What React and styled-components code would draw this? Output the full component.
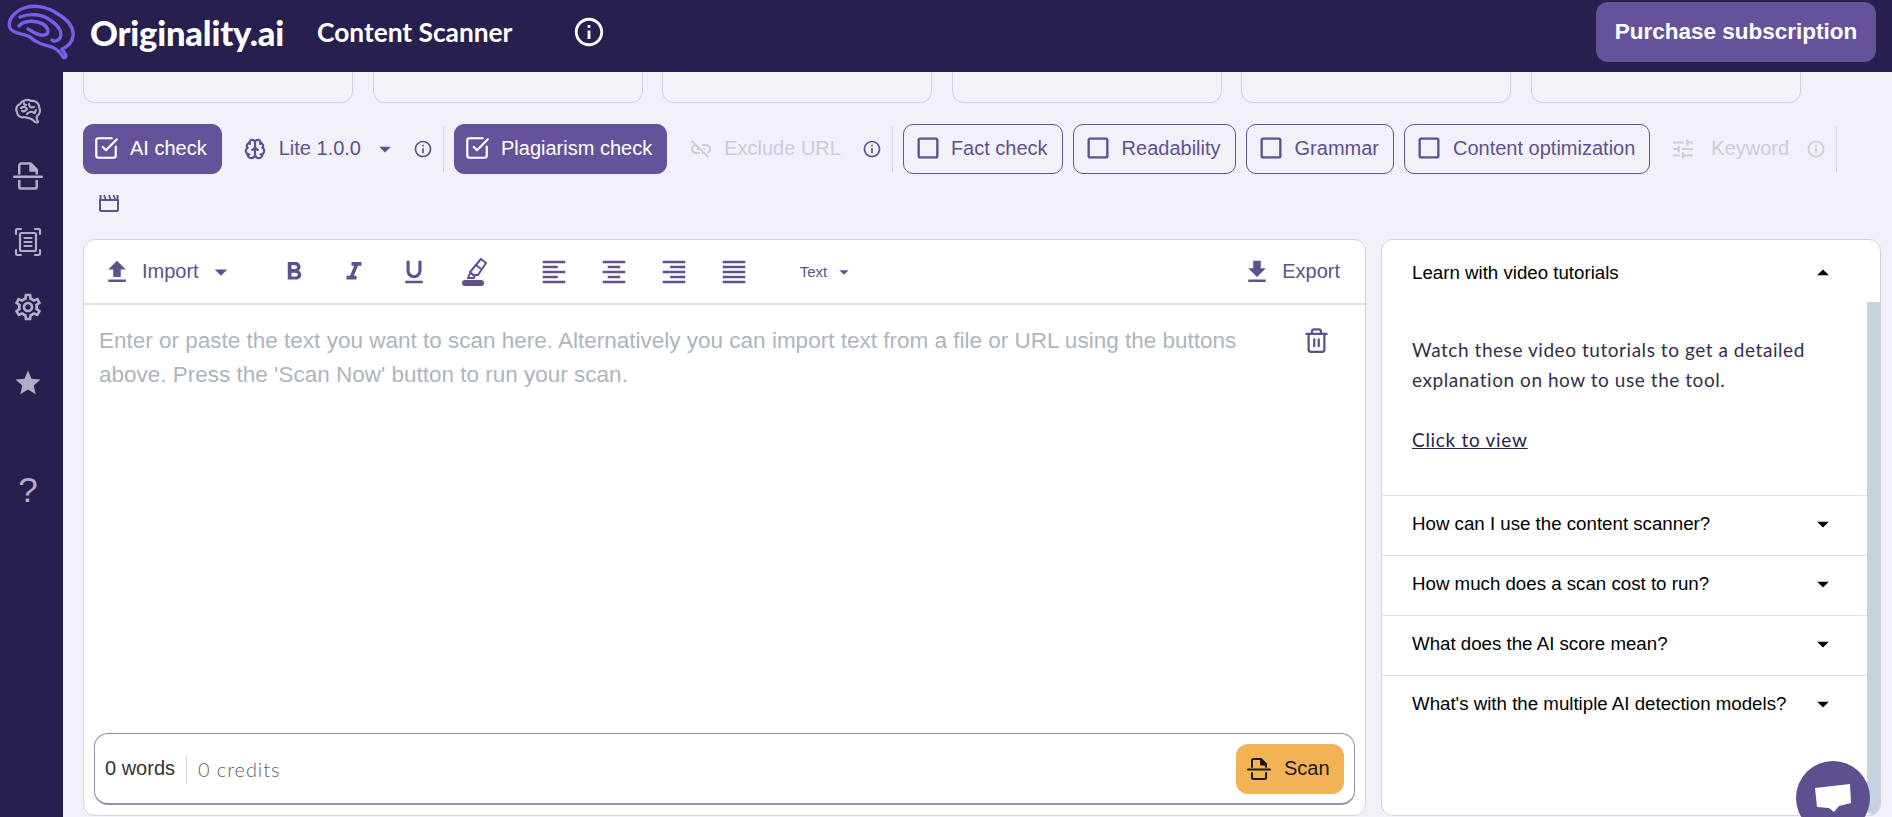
import React from 'react'
import styled, { createGlobalStyle } from 'styled-components'
import {
  MdArrowDropDown,
  MdArrowDropUp,
  MdCheckBoxOutlineBlank,
  MdFileDownload,
  MdFileUpload,
  MdFormatAlignCenter,
  MdFormatAlignJustify,
  MdFormatAlignLeft,
  MdFormatAlignRight,
  MdFormatBold,
  MdFormatItalic,
  MdFormatUnderlined,
  MdInfoOutline,
  MdLinkOff,
  MdOutlineSettings,
  MdStar,
  MdTune,
} from 'react-icons/md'
import { Brain, SquareCheckBig, Trash2 } from 'lucide-react'

const ink = '#271f4d'
const purple = '#64539b'
const purpleText = '#5f5090'
const muted = '#cfcbdd'
const navIcon = '#b3adc8'
const line = '#d5d1e6'

const GlobalStyle = createGlobalStyle`
  html, body {
    margin: 0;
    height: 100%;
    overflow: hidden;
    background: #f2f0f8;
    font-family: "Liberation Sans", Arial, sans-serif;
  }
  * { box-sizing: border-box; }
`

const Page = styled.div`
  display: grid;
  grid-template-rows: 72px 1fr;
  height: 100vh;
`

const Header = styled.header`
  display: flex;
  align-items: center;
  padding: 0 16px 8px 0;
  background: ${ink};
  color: #fff;
`

const LogoSlot = styled.span`
  display: flex;
  align-self: flex-start;
`

const Wordmark = styled.span`
  margin-left: 14px;
  font-family: Lato, sans-serif;
  font-size: 34.5px;
  font-weight: 900;
  letter-spacing: -0.2px;
`

const PageTitle = styled.span`
  margin-left: 33px;
  font-family: Lato, sans-serif;
  font-size: 26.3px;
  font-weight: 700;
`

const HeaderInfo = styled.span`
  display: flex;
  margin-left: 60px;
`

const PurchaseButton = styled.button`
  margin-left: auto;
  width: 280px;
  height: 60px;
  border: 0;
  border-radius: 12px;
  background: ${purple};
  color: #fff;
  font: 700 22.5px "Liberation Sans", Arial, sans-serif;
`

const Shell = styled.div`
  display: flex;
  min-height: 0;
`

const SideNav = styled.nav`
  display: flex;
  flex-direction: column;
  align-items: center;
  gap: 35.4px;
  width: 63px;
  padding: 24px 7px 0 0;
  background: ${ink};
  color: ${navIcon};
`

const NavItem = styled.span`
  display: flex;
  align-items: center;
  justify-content: center;
  height: 30px;
  margin-top: ${props => props.$offset || 0}px;
  font-size: 35px;
`

const Main = styled.main`
  flex: 1;
  display: flex;
  flex-direction: column;
  min-width: 0;
  padding: 0 11px 1px 20px;
`

const StatCards = styled.div`
  display: grid;
  grid-template-columns: repeat(6, 270px);
  gap: 19.5px;
`

const StatCard = styled.div`
  height: 31px;
  border: 1px solid ${line};
  border-top: 0;
  border-radius: 0 0 12px 12px;
  background: #f3f3fa;
`

const Toolbar = styled.div`
  display: flex;
  flex-wrap: wrap;
  align-items: center;
  align-content: flex-start;
  margin-top: 21px;
  row-gap: 12px;
  min-height: 96px;
`

const Toggle = styled.button`
  display: flex;
  align-items: center;
  gap: ${props => props.$gap || 10}px;
  height: 50px;
  margin-right: ${props => props.$end || 0}px;
  padding: 0 14px 2px ${props => props.$left || 9}px;
  border: 1px solid ${purple};
  border-radius: 10px;
  background: ${props => (props.$active ? purple : 'transparent')};
  color: ${props => (props.$active ? '#fff' : purpleText)};
  font: 400 20px "Liberation Sans", Arial, sans-serif;
`

const Option = styled.div`
  display: flex;
  align-items: center;
  height: 50px;
  margin-left: ${props => props.$start || 0}px;
  color: ${props => (props.$disabled ? muted : purpleText)};
  font-size: 20px;
`

const OptionLabel = styled.span`
  margin-left: ${props => props.$left}px;
  padding-bottom: 2px;
`

const OptionIcon = styled.span`
  display: flex;
  margin-left: ${props => props.$left || 0}px;
  color: ${props => (props.$dark ? purpleText : 'inherit')};
`

const Divider = styled.span`
  width: 1px;
  height: 45px;
  margin: 0 10px;
  background: #d9d6e6;
`

const ClapperSlot = styled.div`
  display: flex;
  align-items: center;
  width: 52px;
  height: 34px;
  padding-left: 16px;
  color: ${purpleText};
`

const Panels = styled.div`
  flex: 1;
  display: flex;
  gap: 15px;
  min-height: 0;
  margin-top: 19px;
`

const Editor = styled.section`
  flex: 1;
  display: flex;
  flex-direction: column;
  min-width: 0;
  border: 1px solid ${line};
  border-radius: 12px;
  background: #fff;
`

const EditorBar = styled.div`
  display: flex;
  align-items: center;
  height: 65px;
  padding: 0 25px 0 18px;
  border-bottom: 2px solid #e1dfeb;
  color: ${purpleText};
  font-size: 20px;
`

const BarGroup = styled.div`
  display: flex;
  align-items: center;
  gap: ${props => props.$gap || 0}px;
  margin-left: ${props => props.$start || 0}px;
`

const BarLabel = styled.span`
  margin-left: ${props => props.$left || 0}px;
  font-size: ${props => props.$size || 20}px;
`

const Caret = styled.span`
  display: flex;
  margin-left: ${props => props.$left}px;
`

const Export = styled(BarGroup)`
  margin-left: auto;
  gap: 10px;
`

const EditorBody = styled.div`
  flex: 1;
  display: flex;
  justify-content: space-between;
  padding: 19px 35px 0 15px;
`

const Placeholder = styled.p`
  width: 1165px;
  margin: 0;
  color: #adb5bd;
  font-size: 22.5px;
  line-height: 34px;
`

const TrashIcon = styled.span`
  display: flex;
  height: 28px;
  margin-top: 3px;
  color: ${purpleText};
`

const ScanBar = styled.div`
  display: flex;
  align-items: center;
  height: 72px;
  margin: 0 10px 10px;
  padding: 0 10px;
  border: 1px solid #9490b2;
  border-bottom-width: 2px;
  border-radius: 14px;
  font-size: 20px;
`

const WordCount = styled.span`
  color: #333;
`

const CreditCount = styled.span`
  margin-left: 11px;
  padding-left: 11px;
  border-left: 1px solid #d9d9d9;
  color: #5f5f5f;
  font-family: Lato, sans-serif;
  font-weight: 300;
  line-height: 30px;
  letter-spacing: 0.9px;
`

const ScanButton = styled.button`
  display: flex;
  align-items: center;
  gap: 13px;
  width: 108px;
  height: 50px;
  margin-left: auto;
  padding-left: 11px;
  border: 0;
  border-radius: 12px;
  background: #f3b354;
  color: #1a1a1a;
  font: 400 20px "Liberation Sans", Arial, sans-serif;
`

const Aside = styled.aside`
  display: flex;
  flex: 0 0 500px;
  overflow: hidden;
  border: 1px solid ${line};
  border-radius: 12px;
  background: #fff;
`

const Accordion = styled.div`
  flex: 1;
  min-width: 0;
`

const AccordionRow = styled.div`
  display: flex;
  align-items: center;
  justify-content: space-between;
  height: ${props => props.$height || 60}px;
  padding: 0 30px 3px 30px;
  border-top: ${props => (props.$first ? 0 : '1px solid #e1dfe8')};
  color: #000;
  font-size: 18.7px;
`

const AccordionBody = styled.div`
  padding: 27px 30px 40px;
  color: #33304a;
  font-family: Lato, sans-serif;
  font-size: 19px;
  line-height: 30px;
  letter-spacing: 0.55px;
`

const BodyText = styled.p`
  margin: 0 0 30px;
`

const ViewLink = styled.a`
  color: ${ink};
  letter-spacing: 0.7px;
  text-decoration: underline;
`

const ScrollThumb = styled.div`
  flex: 0 0 13px;
  margin-top: 62px;
  border-radius: 0 0 8px 8px;
  background: #c7d3df;
`

const ChatBubble = styled.div`
  position: fixed;
  top: 761px;
  left: 1796px;
  display: flex;
  justify-content: center;
  width: 74px;
  height: 74px;
  padding-top: 23px;
  border-radius: 50%;
  background: #5e4f90;
`

const Logo = () => (
  <svg width="76" height="60" viewBox="0 0 76 60" fill="none" stroke="#7a5ce6" strokeWidth="3.4" strokeLinecap="round" strokeLinejoin="round">
    <path d="M63 57C60 52 57 49 52 47C44 45 36 43 30 37C24 33 14 35 10 28C7 20 14 12 24 8C34 4 48 7 58 14C68 20 74 28 73 36C72 43 67 47 62 49C64 52 66 54 66 56C66 58 64 58 63 57Z" />
    <path d="M20 17C30 13 42 14 50 20C58 25 63 32 60 38C58 41 54 42 52 40" />
    <path d="M19 26C24 20 36 20 43 24C49 28 50 34 44 35C38 36 34 32 28 29" />
  </svg>
)

const BrainHeadIcon = () => (
  <svg width="28" height="26" viewBox="0 0 28 26" fill="none" stroke="currentColor" strokeWidth="2.2" strokeLinecap="round" strokeLinejoin="round">
    <path d="M20 23C18 20 14 20 10 19C7 20 3 18 3 14C1 11 3 7 6 6C8 2 14 1 17 3C21 2 25 5 25 9C27 12 26 16 23 18C22 20 23 22 24 24C23 25 21 24 20 23Z" />
    <path d="M7 10C10 8 12 9 13 11C12 13 9 14 8 13" />
    <path d="M15 6C15 9 17 10 20 9" />
    <path d="M13 16C15 14 18 13 20 15C21 16 21 13 22 12" />
    <path d="M10 5C10 6 11 7 12 7" />
  </svg>
)

const ScanIcon = ({ size = 30 }) => (
  <svg width={size} height={size} viewBox="0 0 24 24" fill="none" stroke="currentColor" strokeWidth="2" strokeLinecap="round" strokeLinejoin="round">
    <path d="M5 10V3.5C5 2.7 5.7 2 6.5 2H14L19 7V10" />
    <path d="M14 2.5V7.5H19L14 2.5Z" fill="currentColor" />
    <path d="M1 12.5H23" />
    <path d="M5 16V20.5C5 21.3 5.7 22 6.5 22H17.5C18.3 22 19 21.3 19 20.5V16" />
  </svg>
)

const DocFrameIcon = () => (
  <svg width="28" height="30" viewBox="0 0 28 30" fill="none" stroke="currentColor" strokeWidth="2.2" strokeLinecap="round" strokeLinejoin="round">
    <path d="M2 7V3.5C2 2.5 2.5 2 3.5 2H7" />
    <path d="M21 2H24.5C25.5 2 26 2.5 26 3.5V7" />
    <path d="M2 23V26.5C2 27.5 2.5 28 3.5 28H7" />
    <path d="M21 28H24.5C25.5 28 26 27.5 26 26.5V23" />
    <rect x="6" y="6" width="16" height="18" rx="1.5" />
    <path d="M10.5 11H17.5M10.5 15H17.5M10.5 19H17.5" />
  </svg>
)

const ClapperIcon = () => (
  <svg width="20" height="18" viewBox="0 0 20 18" fill="none" stroke="currentColor" strokeWidth="2" strokeLinejoin="round">
    <path d="M1 6H19V16C19 16.6 18.6 17 18 17H2C1.4 17 1 16.6 1 16V6Z" />
    <path d="M1.5 6V1" />
    <path d="M18.5 6V1" />
    <path d="M5 1L6.5 5M10 1L11.5 5M14.5 1L16 5" strokeWidth="1.8" />
  </svg>
)

const HighlighterIcon = () => (
  <svg width="30" height="30" viewBox="0 0 30 30" fill="none" stroke="currentColor" strokeWidth="2" strokeLinejoin="round">
    <path d="M22 2L27 6L19 18H14L11 15L22 2Z" />
    <path d="M17 8L22 12" />
    <path d="M11 16L9 21H15L16 18" />
    <rect x="4" y="24" width="20" height="4" rx="2" fill="currentColor" />
  </svg>
)

const ChatIcon = () => (
  <svg width="38" height="30" viewBox="0 0 38 30" fill="#fff">
    <path d="M1 4L36 0L37 19L25 22L20 28L15 24L3 23Z" />
  </svg>
)

const questions = [
  'How can I use the content scanner?',
  'How much does a scan cost to run?',
  'What does the AI score mean?',
  "What's with the multiple AI detection models?",
]

const formats = [MdFormatBold, MdFormatItalic, MdFormatUnderlined, HighlighterIcon]
const aligns = [MdFormatAlignLeft, MdFormatAlignCenter, MdFormatAlignRight, MdFormatAlignJustify]

export default function App() {
  return (
    <Page>
      <GlobalStyle />
      <Header>
        <LogoSlot><Logo /></LogoSlot>
        <Wordmark>Originality.ai</Wordmark>
        <PageTitle>Content Scanner</PageTitle>
        <HeaderInfo><MdInfoOutline size={34} /></HeaderInfo>
        <PurchaseButton>Purchase subscription</PurchaseButton>
      </Header>
      <Shell>
        <SideNav>
          <NavItem><BrainHeadIcon /></NavItem>
          <NavItem><ScanIcon /></NavItem>
          <NavItem><DocFrameIcon /></NavItem>
          <NavItem><MdOutlineSettings size={32} /></NavItem>
          <NavItem $offset={10}><MdStar size={30} /></NavItem>
          <NavItem $offset={42}>?</NavItem>
        </SideNav>
        <Main>
          <StatCards>
            {[0, 1, 2, 3, 4, 5].map(i => <StatCard key={i} />)}
          </StatCards>
          <Toolbar>
            <Toggle $active $gap={11}><SquareCheckBig size={26} strokeWidth={2} />AI check</Toggle>
            <Option $start={22}>
              <Brain size={22} strokeWidth={2.4} />
              <OptionLabel $left={13}>Lite 1.0.0</OptionLabel>
              <OptionIcon $left={10}><MdArrowDropDown size={28} /></OptionIcon>
              <OptionIcon $left={14}><MdInfoOutline size={20} /></OptionIcon>
            </Option>
            <Divider />
            <Toggle $active $gap={11}><SquareCheckBig size={26} strokeWidth={2} />Plagiarism check</Toggle>
            <Option $start={22} $disabled>
              <MdLinkOff size={24} />
              <OptionLabel $left={11}>Exclude URL</OptionLabel>
              <OptionIcon $left={21} $dark><MdInfoOutline size={20} /></OptionIcon>
            </Option>
            <Divider />
            <Toggle $end={10} $left={10} $gap={9}><MdCheckBoxOutlineBlank size={28} />Fact check</Toggle>
            <Toggle $end={10} $left={10}><MdCheckBoxOutlineBlank size={28} />Readability</Toggle>
            <Toggle $end={10} $left={10}><MdCheckBoxOutlineBlank size={28} />Grammar</Toggle>
            <Toggle $left={10}><MdCheckBoxOutlineBlank size={28} />Content optimization</Toggle>
            <Option $start={20} $disabled>
              <MdTune size={26} />
              <OptionLabel $left={15}>Keyword</OptionLabel>
              <OptionIcon $left={17}><MdInfoOutline size={20} /></OptionIcon>
            </Option>
            <Divider />
            <ClapperSlot><ClapperIcon /></ClapperSlot>
          </Toolbar>
          <Panels>
            <Editor>
              <EditorBar>
                <BarGroup>
                  <MdFileUpload size={30} />
                  <BarLabel $left={10}>Import</BarLabel>
                  <Caret $left={7}><MdArrowDropDown size={30} /></Caret>
                </BarGroup>
                <BarGroup $start={43} $gap={30}>
                  {formats.map((Icon, i) => <Icon key={i} size={30} />)}
                </BarGroup>
                <BarGroup $start={50} $gap={30}>
                  {aligns.map((Icon, i) => <Icon key={i} size={30} />)}
                </BarGroup>
                <BarGroup $start={51}>
                  <BarLabel $size={15}>Text</BarLabel>
                  <Caret $left={6}><MdArrowDropDown size={22} /></Caret>
                </BarGroup>
                <Export>
                  <MdFileDownload size={30} />
                  <BarLabel>Export</BarLabel>
                </Export>
              </EditorBar>
              <EditorBody>
                <Placeholder>
                  Enter or paste the text you want to scan here. Alternatively you can import text from a file or URL using the buttons above. Press the 'Scan Now' button to run your scan.
                </Placeholder>
                <TrashIcon><Trash2 size={27} strokeWidth={2} /></TrashIcon>
              </EditorBody>
              <ScanBar>
                <WordCount>0 words</WordCount>
                <CreditCount>0 credits</CreditCount>
                <ScanButton><ScanIcon size={24} />Scan</ScanButton>
              </ScanBar>
            </Editor>
            <Aside>
              <Accordion>
                <AccordionRow $first $height={68}>
                  Learn with video tutorials
                  <MdArrowDropUp size={28} />
                </AccordionRow>
                <AccordionBody>
                  <BodyText>Watch these video tutorials to get a detailed explanation on how to use the tool.</BodyText>
                  <ViewLink>Click to view</ViewLink>
                </AccordionBody>
                {questions.map(q => (
                  <AccordionRow key={q}>
                    {q}
                    <MdArrowDropDown size={28} />
                  </AccordionRow>
                ))}
              </Accordion>
              <ScrollThumb />
            </Aside>
          </Panels>
        </Main>
      </Shell>
      <ChatBubble><ChatIcon /></ChatBubble>
    </Page>
  )
}
